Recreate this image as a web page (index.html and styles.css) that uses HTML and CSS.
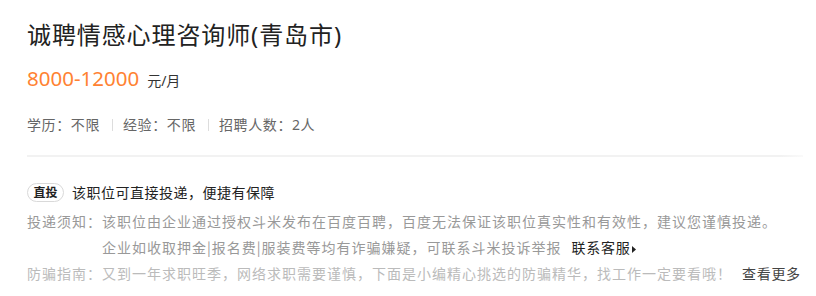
FILE: index.html
```html
<!DOCTYPE html>
<html lang="zh-CN">
<head>
<meta charset="utf-8">
<title>诚聘情感心理咨询师(青岛市)</title>
<link rel="stylesheet" href="styles.css">
</head>
<body>
<div class="job">
  <h1 class="job-title">诚聘情感心理咨询师(青岛市)</h1>
  <div class="salary"><span class="salary-num">8000-12000</span><span class="salary-unit">元/月</span></div>
  <div class="info">
    <span class="info-item">学历：不限</span><span class="sep"></span>
    <span class="info-item">经验：不限</span><span class="sep"></span>
    <span class="info-item">招聘人数：2人</span>
  </div>
  <div class="divider"></div>
  <div class="direct">
    <span class="badge">直投</span>
    <span class="direct-text">该职位可直接投递，便捷有保障</span>
  </div>
  <div class="notice">
    <div class="notice-row">
      <span class="label">投递须知：</span>
      <div class="notice-body">
        <div>该职位由企业通过授权斗米发布在百度百聘，百度无法保证该职位真实性和有效性，建议您谨慎投递。</div>
        <div>企业如收取押金|报名费|服装费等均有诈骗嫌疑，可联系斗米投诉举报<a class="link">联系客服<svg class="arrow" width="4" height="7" viewBox="0 0 4 7"><path d="M0 0L4 3.5L0 7Z" fill="#222"/></svg></a></div>
      </div>
    </div>
    <div class="notice-row guide">
      <span class="label">防骗指南：</span>
      <div class="notice-body">
        <div>又到一年求职旺季，网络求职需要谨慎，下面是小编精心挑选的防骗精华，找工作一定要看哦！<a class="link more">查看更多<svg class="arrow" width="4" height="7" viewBox="0 0 4 7"><path d="M0 0L4 3.5L0 7Z" fill="#ddd"/></svg></a></div>
      </div>
    </div>
  </div>
</div>
</body>
</html>
```
FILE: styles.css
```css
* { box-sizing: border-box; }
html, body { margin: 0; padding: 0; background: #fff; }
body {
  font-family: "Noto Sans", "Noto Sans CJK SC", sans-serif;
  color: #333;
}
.job {
  padding: 19px 13px 0 27px;
}
.job-title {
  margin: 0;
  font-size: 24px;
  line-height: 32px;
  font-weight: normal;
  color: #222;
  letter-spacing: 0.9px;
}
.salary {
  margin-top: 13px;
  height: 28px;
  display: flex;
  align-items: baseline;
  line-height: 28px;
}
.salary-num {
  font-size: 20.5px;
  color: #ff8232;
}
.salary-unit {
  font-size: 14px;
  color: #333;
  margin-left: 8px;
}
.info {
  margin-top: 23px;
  display: flex;
  align-items: center;
  font-size: 14px;
  line-height: 20px;
  color: #666;
  letter-spacing: 0.6px;
}
.sep {
  width: 1px;
  height: 12px;
  background: #ddd;
  margin: 0 10px 0 12px;
}
.divider {
  margin-top: 20px;
  height: 2px;
  width: 776px;
  background: linear-gradient(to right, #f2f2f2 97%, #fafafa);
}
.direct {
  margin-top: 23px;
  height: 24px;
  display: flex;
  align-items: center;
}
.badge {
  display: inline-flex;
  align-items: center;
  justify-content: center;
  width: 37px;
  height: 19px;
  border: 1px solid #d9d9d9;
  border-radius: 10px;
  font-size: 12px;
  color: #222;
  font-weight: 700;
}
.direct-text {
  margin-left: 8px;
  font-size: 14px;
  color: #222;
  letter-spacing: 0.5px;
}
.notice {
  margin-top: 4px;
  font-family: "Noto Sans CJK SC", sans-serif;
  font-size: 14px;
  line-height: 26px;
  letter-spacing: 1px;
  color: #999;
}
.notice-row {
  display: flex;
}
.label {
  flex: none;
}
.guide { color: #bbb; }
.link {
  color: #222;
  margin-left: 10px;
  letter-spacing: 0.7px;
}
.more {
  color: #444;
  margin-left: 10px;
}
.arrow {
  margin-left: 2px;
  vertical-align: 0px;
}
```
